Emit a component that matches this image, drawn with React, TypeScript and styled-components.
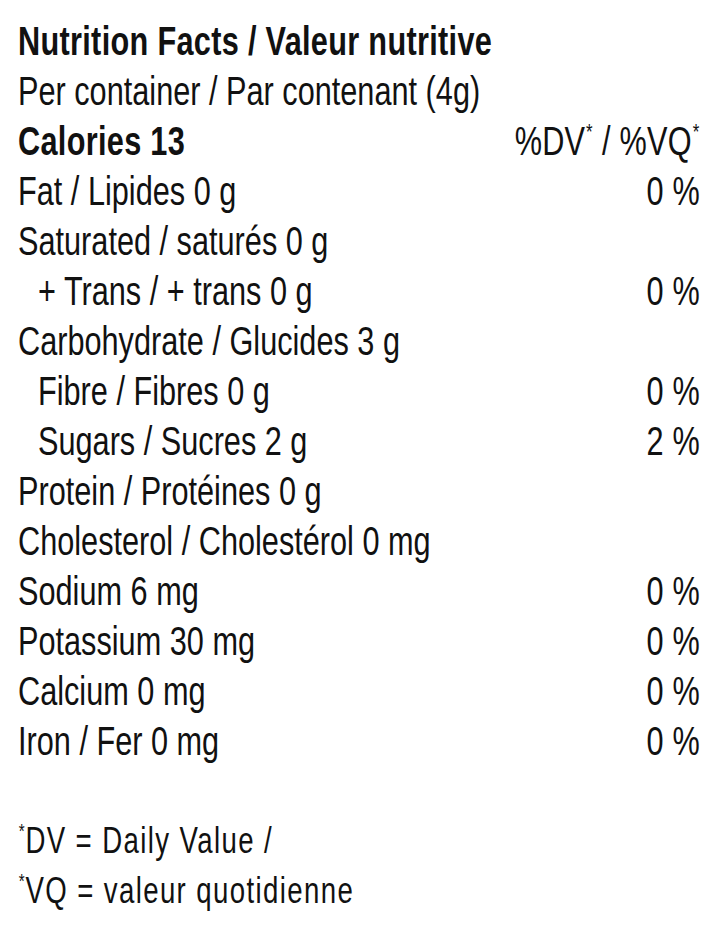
import React from "react";
import styled, { createGlobalStyle } from "styled-components";

const SCALE = 0.767;

const GlobalStyle = createGlobalStyle`
  html, body {
    margin: 0;
    padding: 0;
    background: #ffffff;
  }
  body {
    font-family: "Liberation Sans", Arial, sans-serif;
    color: #111111;
  }
`;

const Page = styled.div`
  width: 720px;
  box-sizing: border-box;
  padding: 16px 20px 0 18px;
  overflow: hidden;
`;

/* The label face is a condensed grotesque: a horizontally compressed sans */
const Label = styled.div`
  width: ${682 / SCALE}px;
  transform: scaleX(${SCALE});
  transform-origin: 0 0;
  display: flex;
  flex-direction: column;
  font-size: 40px;
`;

const Row = styled.div<{ $indent?: boolean }>`
  display: flex;
  justify-content: space-between;
  align-items: baseline;
  height: 50px;
  line-height: 50px;
  white-space: nowrap;
  padding-left: ${(p) => (p.$indent ? `${20 / SCALE}px` : "0")};
`;

const Name = styled.span<{ $bold?: boolean }>`
  font-weight: ${(p) => (p.$bold ? 700 : 400)};
  letter-spacing: ${(p) => (p.$bold ? "0.4px" : "0")};
`;

const Pct = styled.span`
  font-weight: 400;
  letter-spacing: 0.3px;
`;

const Star = styled.sup`
  font-size: 0.55em;
  vertical-align: 0.75em;
  line-height: 0;
  letter-spacing: 0;
  padding: 0 1px;
`;

const Spacer = styled.div`
  height: 50px;
`;

const Footnote = styled.div`
  height: 50px;
  line-height: 50px;
  font-size: 36px;
  letter-spacing: 1.8px;
  white-space: nowrap;
`;

type Item = { name: string; pct?: string; indent?: boolean };

const items: Item[] = [
  { name: "Fat / Lipides 0 g", pct: "0 %" },
  { name: "Saturated / saturés 0 g" },
  { name: "+ Trans / + trans 0 g", pct: "0 %", indent: true },
  { name: "Carbohydrate / Glucides 3 g" },
  { name: "Fibre / Fibres 0 g", pct: "0 %", indent: true },
  { name: "Sugars / Sucres 2 g", pct: "2 %", indent: true },
  { name: "Protein / Protéines 0 g" },
  { name: "Cholesterol / Cholestérol 0 mg" },
  { name: "Sodium 6 mg", pct: "0 %" },
  { name: "Potassium 30 mg", pct: "0 %" },
  { name: "Calcium 0 mg", pct: "0 %" },
  { name: "Iron / Fer 0 mg", pct: "0 %" },
];

export default function App() {
  return (
    <>
      <GlobalStyle />
      <Page>
        <Label>
          <Row>
            <Name $bold>Nutrition Facts / Valeur nutritive</Name>
          </Row>
          <Row>
            <Name>Per container / Par contenant (4g)</Name>
          </Row>
          <Row>
            <Name $bold>Calories 13</Name>
            <Pct>
              %DV<Star>*</Star> / %VQ<Star>*</Star>
            </Pct>
          </Row>
          {items.map((it) => (
            <Row key={it.name} $indent={it.indent}>
              <Name>{it.name}</Name>
              {it.pct && <Pct>{it.pct}</Pct>}
            </Row>
          ))}
          <Spacer />
          <Footnote>
            <Star>*</Star>DV = Daily Value /
          </Footnote>
          <Footnote>
            <Star>*</Star>VQ = valeur quotidienne
          </Footnote>
        </Label>
      </Page>
    </>
  );
}
